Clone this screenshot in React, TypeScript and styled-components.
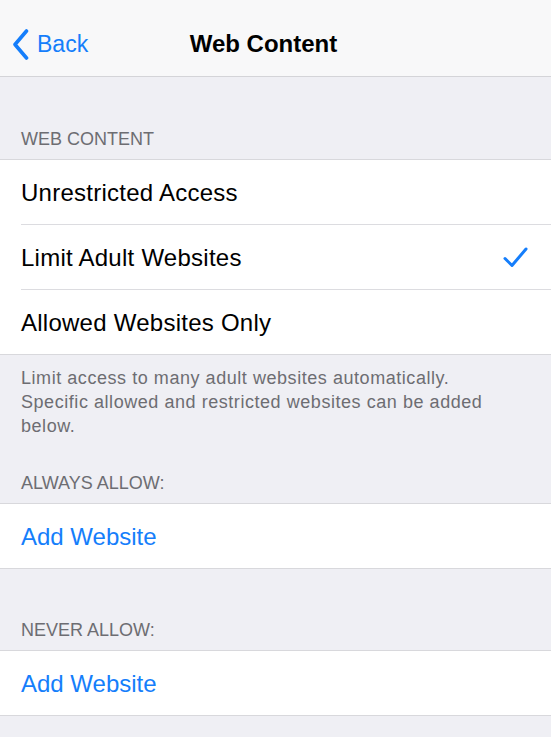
import React from "react";
import styled, { createGlobalStyle } from "styled-components";

const Global = createGlobalStyle`
  html, body {
    margin: 0;
    padding: 0;
    background: #efeff4;
    font-family: "Liberation Sans", Arial, sans-serif;
    -webkit-font-smoothing: antialiased;
  }
`;

const Page = styled.div`
  width: 551px;
  min-height: 737px;
  background: #efeff4;
  display: flex;
  flex-direction: column;
`;

const NavBar = styled.header`
  height: 64px;
  padding: 12px 24px 0 0;
  background: #f8f8f9;
  border-bottom: 1px solid #d4d4d8;
  display: grid;
  grid-template-columns: 1fr auto 1fr;
  align-items: center;
`;

const BackButton = styled.div`
  display: flex;
  align-items: center;
  gap: 8px;
  padding-left: 12px;
  color: #157efb;
  font-size: 23px;
  line-height: 28px;
`;

const Title = styled.h1`
  margin: 0;
  font-size: 24px;
  line-height: 28px;
  font-weight: 700;
  color: #000;
`;

const SectionHeader = styled.div<{ $top: number }>`
  padding: ${(p) => p.$top}px 21px 9px;
  font-size: 18px;
  line-height: 22px;
  color: #6d6d72;
  text-transform: uppercase;
`;

const Group = styled.div`
  background: #fff;
  border-top: 1px solid #d8d8dc;
  border-bottom: 1px solid #d8d8dc;
  display: flex;
  flex-direction: column;
`;

const Row = styled.div`
  display: flex;
  align-items: center;
  justify-content: space-between;
  height: 64px;
  margin-left: 21px;
  padding-right: 23px;
  & + & {
    border-top: 1px solid #dcdce0;
  }
`;

const RowLabel = styled.span<{ $link?: boolean }>`
  font-size: 24px;
  line-height: 29px;
  letter-spacing: ${(p) => (p.$link ? "0" : "0.25px")};
  color: ${(p) => (p.$link ? "#157efb" : "#000")};
`;

const Footer = styled.div`
  padding: 11px 40px 0 21px;
  font-size: 18px;
  line-height: 24px;
  letter-spacing: 0.55px;
  color: #6d6d72;
`;

const Chevron = () => (
  <svg width="17" height="31" viewBox="0 0 17 31" fill="none">
    <path
      d="M14.5 2 L3 15.5 L14.5 29"
      stroke="#157efb"
      strokeWidth="3.6"
      strokeLinecap="round"
      strokeLinejoin="round"
    />
  </svg>
);

const Check = () => (
  <svg width="25" height="21" viewBox="0 0 25 21" fill="none">
    <path
      d="M2 11.5 L9 18.5 L23 2"
      stroke="#157efb"
      strokeWidth="3"
      strokeLinecap="round"
      strokeLinejoin="round"
    />
  </svg>
);

const options = [
  { label: "Unrestricted Access", checked: false },
  { label: "Limit Adult Websites", checked: true },
  { label: "Allowed Websites Only", checked: false },
];

export default function App() {
  return (
    <Page>
      <Global />
      <NavBar>
        <BackButton>
          <Chevron />
          <span>Back</span>
        </BackButton>
        <Title>Web Content</Title>
        <div />
      </NavBar>

      <SectionHeader $top={51}>Web Content</SectionHeader>
      <Group>
        {options.map((o) => (
          <Row key={o.label}>
            <RowLabel>{o.label}</RowLabel>
            {o.checked && <Check />}
          </Row>
        ))}
      </Group>
      <Footer>
        Limit access to many adult websites automatically. Specific allowed and
        restricted websites can be added below.
      </Footer>

      <SectionHeader $top={34}>Always Allow:</SectionHeader>
      <Group>
        <Row>
          <RowLabel $link>Add Website</RowLabel>
        </Row>
      </Group>

      <SectionHeader $top={50}>Never Allow:</SectionHeader>
      <Group>
        <Row>
          <RowLabel $link>Add Website</RowLabel>
        </Row>
      </Group>
    </Page>
  );
}
